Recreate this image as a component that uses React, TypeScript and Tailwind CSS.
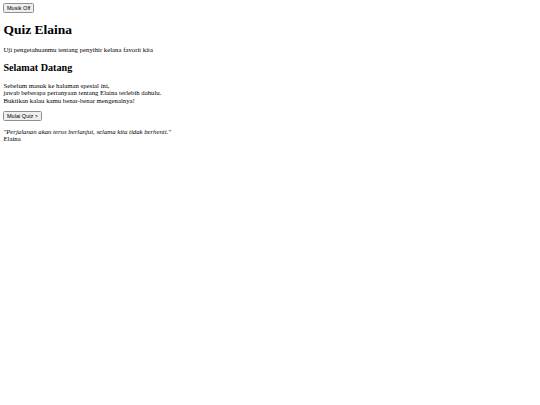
import React, { useState } from 'react';

// Plain landing page for the Elaina quiz, rendered at a compact size
export default function App() {
  const [musicOn, setMusicOn] = useState(false);

  const btn =
    "bg-[#efefef] border-[0.6px] border-[#8f8f8f] rounded-[1.5px] px-[2.5px] py-[0.5px] text-[5.6px] leading-[6.9px] text-black";
  const sans = { fontFamily: '"Liberation Sans", Arial, sans-serif' };

  return (
    <div
      className="min-h-screen bg-white text-black p-[3.4px] text-[6.75px] leading-[1.11]"
      style={{ fontFamily: '"Liberation Serif", "Times New Roman", serif' }}
    >
      <div>
        <button className={btn} style={sans} onClick={() => setMusicOn(m => !m)}>
          {musicOn ? 'Musik On' : 'Musik Off'}
        </button>
      </div>

      <h1 className="text-[2em] font-bold my-[0.67em]">Quiz Elaina</h1>
      <p className="my-[1em]">Uji pengetahuanmu tentang penyihir kelana favorit kita</p>

      <section>
        <h2 className="text-[1.5em] font-bold my-[0.83em]">Selamat Datang</h2>
        <p className="my-[1em]">
          Sebelum masuk ke halaman spesial ini,
          <br />
          jawab beberapa pertanyaan tentang Elaina terlebih dahulu.
          <br />
          Buktikan kalau kamu benar-benar mengenalnya!
        </p>
        <button className={btn} style={sans}>
          Mulai Quiz &gt;
        </button>
        <p className="mt-[1em]">
          <i>"Perjalanan akan terus berlanjut, selama kita tidak berhenti."</i>
          <br />
          Elaina
        </p>
      </section>
    </div>
  );
}
